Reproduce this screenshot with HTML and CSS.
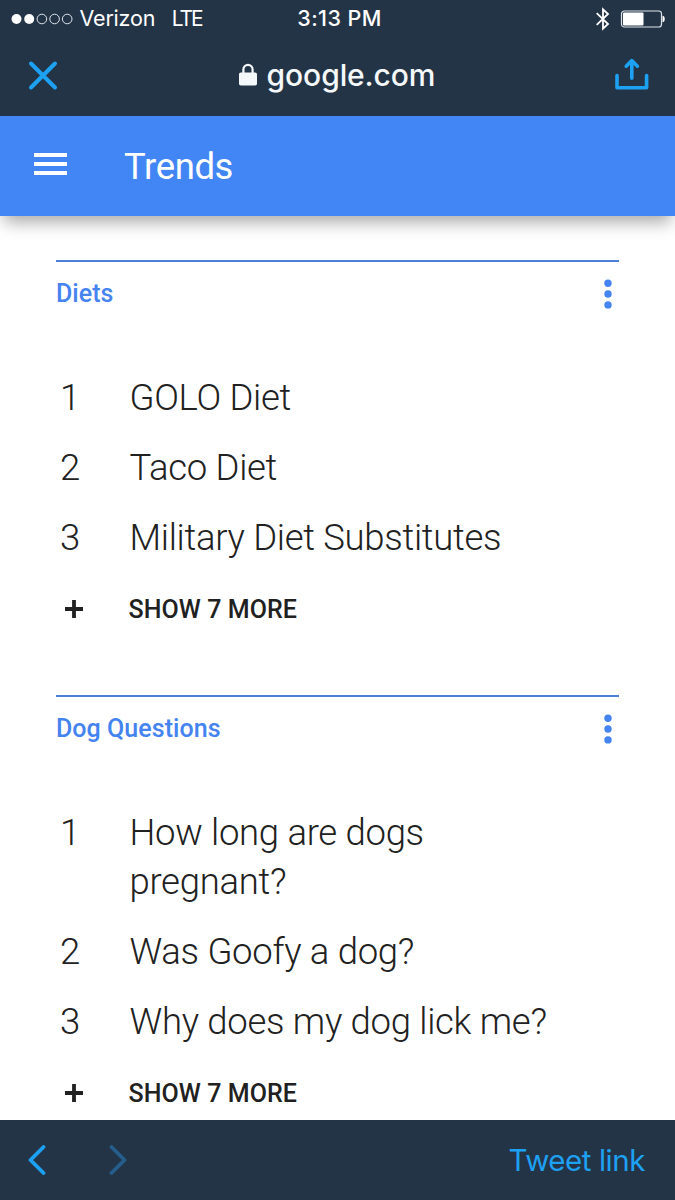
FILE: index.html
```html
<!DOCTYPE html>
<html lang="en">
<head>
<meta charset="utf-8">
<title>Trends</title>
<link rel="stylesheet" href="styles.css">
</head>
<body>
<div class="screen">
  <header class="browser-top">
    <div class="status">
      <div class="carrier">
        <svg class="signal" width="62" height="12" viewBox="0 0 62 12"><g fill="#fff"><circle cx="5.5" cy="6" r="5"/><circle cx="18.2" cy="6" r="5"/></g><g fill="none" stroke="#dce3ea" stroke-width="1"><circle cx="30.9" cy="6" r="4.8"/><circle cx="43.6" cy="6" r="4.8"/><circle cx="56.2" cy="6" r="4.8"/></g></svg>
        <span class="carrier-name">Verizon</span>
        <span class="network">LTE</span>
      </div>
      <div class="time">3:13 PM</div>
      <div class="indicators">
        <svg width="16" height="26" viewBox="0 0 16 26" fill="none" stroke="#fff" stroke-width="1.8"><path d="M1.7 7.2 13 18 8 22.6V3.4L13 8 1.7 18.8"/></svg>
        <svg width="46" height="18" viewBox="0 0 46 18"><rect x="1.5" y="1" width="40" height="16" rx="2.8" fill="none" stroke="#dce3ea" stroke-width="1.2"/><rect x="3" y="2.6" width="20.5" height="12.8" rx="1" fill="#fff"/><path d="M42.5 5.8c3 0 3 6.4 0 6.4z" fill="#fff"/></svg>
      </div>
    </div>
    <div class="address">
      <svg class="close" width="32" height="32" viewBox="0 0 32 32" fill="none" stroke="#1da1f2" stroke-width="4" stroke-linecap="round"><path d="M4 4.5 28 28.5M28 4.5 4 28.5"/></svg>
      <div class="site">
        <svg width="18" height="23" viewBox="0 0 18 23"><path d="M4.4 11V6.5a4.6 4.6 0 0 1 9.2 0V11" fill="none" stroke="#f5f8fa" stroke-width="2.2"/><rect x="0" y="9.5" width="18" height="13" rx="1.8" fill="#f5f8fa"/></svg>
        <span>google.com</span>
      </div>
      <svg class="share" width="34" height="34" viewBox="0 0 34 34" fill="none" stroke="#1da1f2" stroke-width="3.6" stroke-linecap="round" stroke-linejoin="round"><path d="M2 17.5V29.7H31.6V17.5"/><path d="M16.8 20.2V3M11.2 8.2 16.8 2.6 22.4 8.2"/></svg>
    </div>
  </header>
  <div class="appbar">
    <svg class="menu" width="33" height="23" viewBox="0 0 33 23" fill="#fff"><path d="M0 1h33v4H0zM0 10h33v4H0zM0 19h33v4H0z"/></svg>
    <h1>Trends</h1>
  </div>
  <main>
    <section class="card">
      <div class="card-head">
        <h2>Diets</h2>
        <svg width="8" height="30" viewBox="0 0 8 30" fill="#4483f0"><circle cx="4" cy="4.3" r="3.7"/><circle cx="4" cy="15" r="3.7"/><circle cx="4" cy="25.9" r="3.7"/></svg>
      </div>
      <ol>
        <li><span class="rank">1</span><span class="term">GOLO Diet</span></li>
        <li><span class="rank">2</span><span class="term">Taco Diet</span></li>
        <li><span class="rank">3</span><span class="term">Military Diet Substitutes</span></li>
      </ol>
      <div class="more"><svg width="18" height="18" viewBox="0 0 18 18"><path d="M9 0v18M0 9h18" stroke="#212121" stroke-width="3.8"/></svg><span>SHOW 7 MORE</span></div>
    </section>
    <section class="card">
      <div class="card-head">
        <h2>Dog Questions</h2>
        <svg width="8" height="30" viewBox="0 0 8 30" fill="#4483f0"><circle cx="4" cy="4.3" r="3.7"/><circle cx="4" cy="15" r="3.7"/><circle cx="4" cy="25.9" r="3.7"/></svg>
      </div>
      <ol>
        <li><span class="rank">1</span><span class="term">How long are dogs pregnant?</span></li>
        <li><span class="rank">2</span><span class="term">Was Goofy a dog?</span></li>
        <li><span class="rank">3</span><span class="term">Why does my dog lick me?</span></li>
      </ol>
      <div class="more"><svg width="18" height="18" viewBox="0 0 18 18"><path d="M9 0v18M0 9h18" stroke="#212121" stroke-width="3.8"/></svg><span>SHOW 7 MORE</span></div>
    </section>
  </main>
  <footer>
    <svg width="18" height="30" viewBox="0 0 18 30" fill="none" stroke="#1da1f2" stroke-width="3.8" stroke-linecap="round" stroke-linejoin="round"><path d="M15.5 2 2.5 15l13 13"/></svg>
    <svg class="forward" width="18" height="30" viewBox="0 0 18 30" fill="none" stroke="#255d8b" stroke-width="3.8" stroke-linecap="round" stroke-linejoin="round"><path d="M2.5 2l13 13-13 13"/></svg>
    <span class="tweet">Tweet link</span>
  </footer>
</div>
</body>
</html>
```
FILE: styles.css
```css
* { box-sizing: border-box; }
body { margin: 0; background: #fff; font-family: Roboto, sans-serif; }
svg { display: block; flex: none; }
h1, h2, ol { margin: 0; padding: 0; }
.screen { width: 675px; height: 1200px; display: flex; flex-direction: column; overflow: hidden; }
.browser-top { height: 116px; flex: none; background: #243447; color: #fff; font-family: Inter, sans-serif; position: relative; z-index: 2; }
.status { height: 38px; display: grid; grid-template-columns: 1fr auto 1fr; align-items: center; padding: 0 9px 1px 11px; font-size: 21.5px; line-height: 37px; white-space: nowrap; }
.carrier { display: flex; align-items: center; }
.carrier-name { margin-left: 6.5px; letter-spacing: -.2px; }
.network { margin-left: 16.5px; font-size: 21px; letter-spacing: -2px; }
.time { font-weight: 500; padding-left: 2px; letter-spacing: .4px; }
.indicators { display: flex; justify-content: flex-end; align-items: center; gap: 9px; }
.address { height: 78px; display: grid; grid-template-columns: 1fr auto 1fr; align-items: center; padding: 0 26px 4px 27px; }
.share { justify-self: end; }
.site { display: flex; align-items: center; gap: 10px; margin: 0 2px 1px 0; color: #f5f8fa; font-size: 30px; font-weight: 500; letter-spacing: -.1px; line-height: 40px; }
.appbar { height: 100px; flex: none; background: #4285f4; color: #fff; display: flex; align-items: center; padding: 0 34px; gap: 57px; box-shadow: 0 10px 16px -4px rgba(0,0,0,.35); z-index: 1; }
.menu { margin-bottom: 5px; }
h1 { font-size: 36.5px; font-weight: 400; line-height: 48px; letter-spacing: -.4px; padding-top: 2px; }
main { flex: 1; min-height: 0; padding: 44px 56px 0; overflow: hidden; }
.card { height: 435px; border-top: 2px solid #4c80d6; }
.card-head { height: 64px; display: flex; justify-content: space-between; align-items: center; padding-right: 7px; color: #4483f0; }
h2 { font-size: 25px; font-weight: 500; line-height: 32px; letter-spacing: .05px; }
ol { list-style: none; padding-top: 47px; display: grid; gap: 21px; }
li { display: grid; grid-template-columns: 73.5px 330px; font-size: 36.5px; font-weight: 300; line-height: 49px; letter-spacing: -.3px; color: #212121; }
li:not(:first-child), .card:first-child li { grid-template-columns: 73.5px 450px; }
.rank { padding-left: 4px; }
.more { display: flex; align-items: center; gap: 45.5px; height: 32px; margin-top: 31px; padding-left: 9px; color: #212121; font-size: 25px; font-weight: 500; letter-spacing: .07px; }
footer { height: 80px; flex: none; background: #243447; display: flex; align-items: center; padding: 0 30px 0 28px; }
.forward { margin-left: 63px; }
.tweet { margin-left: auto; color: #1da1f2; font: 400 29.5px/40px Inter, sans-serif; letter-spacing: -.45px; }
```
